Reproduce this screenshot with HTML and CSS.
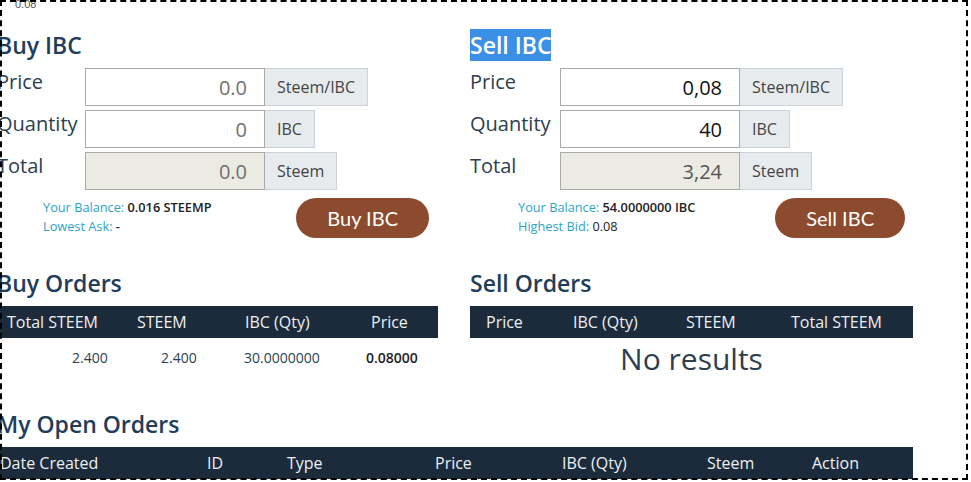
FILE: index.html
```html
<!DOCTYPE html>
<html lang="en">
<head>
    <meta charset="UTF-8">
    <meta name="viewport" content="width=device-width, initial-scale=1.0">
    <title>IBC Market</title>
    <link rel="stylesheet" href="styles.css">
</head>
<body>
    <div class="frame"></div>
    <div class="rate">0.08</div>

    <div class="page">
        <div class="cols">
            <section class="trade">
                <h2 class="title">Buy IBC</h2>

                <div class="field">
                    <label for="buyPrice">Price</label>
                    <div class="group">
                        <input type="text" id="buyPrice" class="num" placeholder="0.0">
                        <span class="addon">Steem/IBC</span>
                    </div>
                </div>
                <div class="field">
                    <label for="buyQty">Quantity</label>
                    <div class="group">
                        <input type="text" id="buyQty" class="num" placeholder="0">
                        <span class="addon">IBC</span>
                    </div>
                </div>
                <div class="field">
                    <label for="buyTotal">Total</label>
                    <div class="group">
                        <input type="text" id="buyTotal" class="num total" placeholder="0.0" readonly>
                        <span class="addon">Steem</span>
                    </div>
                </div>

                <div class="trade-foot">
                    <div class="info">
                        <div><span class="key">Your Balance:</span> <b>0.016 STEEMP</b></div>
                        <div><span class="key">Lowest Ask:</span> <b>-</b></div>
                    </div>
                    <button class="btn">Buy IBC</button>
                </div>
            </section>

            <section class="trade sell">
                <h2 class="title"><span class="picked">Sell IBC</span></h2>

                <div class="field">
                    <label for="sellPrice">Price</label>
                    <div class="group">
                        <input type="text" id="sellPrice" class="num" value="0,08">
                        <span class="addon">Steem/IBC</span>
                    </div>
                </div>
                <div class="field">
                    <label for="sellQty">Quantity</label>
                    <div class="group">
                        <input type="text" id="sellQty" class="num" value="40">
                        <span class="addon">IBC</span>
                    </div>
                </div>
                <div class="field">
                    <label for="sellTotal">Total</label>
                    <div class="group">
                        <input type="text" id="sellTotal" class="num total" value="3,24" readonly>
                        <span class="addon">Steem</span>
                    </div>
                </div>

                <div class="trade-foot">
                    <div class="info">
                        <div><span class="key">Your Balance:</span> <b>54.0000000 IBC</b></div>
                        <div><span class="key">Highest Bid:</span> <b class="light">0.08</b></div>
                    </div>
                    <button class="btn">Sell IBC</button>
                </div>
            </section>
        </div>

        <div class="cols">
            <section>
                <h2 class="title">Buy Orders</h2>
                <div class="grid buy-grid">
                    <div class="head">Total STEEM</div>
                    <div class="head">STEEM</div>
                    <div class="head">IBC (Qty)</div>
                    <div class="head">Price</div>
                    <div class="cell b1">2.400</div>
                    <div class="cell b2">2.400</div>
                    <div class="cell b3">30.0000000</div>
                    <div class="cell b4"><b>0.08000</b></div>
                </div>
            </section>

            <section>
                <h2 class="title">Sell Orders</h2>
                <div class="grid sell-grid">
                    <div class="head">Price</div>
                    <div class="head">IBC (Qty)</div>
                    <div class="head">STEEM</div>
                    <div class="head">Total STEEM</div>
                </div>
                <div class="empty">No results</div>
            </section>
        </div>

        <section class="open">
            <h2 class="title">My Open Orders</h2>
            <div class="grid open-grid">
                <div class="head">Date Created</div>
                <div class="head">ID</div>
                <div class="head">Type</div>
                <div class="head">Price</div>
                <div class="head">IBC (Qty)</div>
                <div class="head">Steem</div>
                <div class="head">Action</div>
            </div>
        </section>
    </div>
</body>
</html>
```

FILE: styles.css
```css
body {
    margin: 0;
    font-family: "Open Sans", Arial, sans-serif;
    color: #2c3e50;
    background-color: #fff;
}

.frame {
    position: fixed;
    left: 0;
    top: 0;
    width: 968px;
    height: 480px;
    box-sizing: border-box;
    border: 2px dashed #000;
    pointer-events: none;
    z-index: 5;
}

.rate {
    margin-top: -2px;
    padding-left: 15px;
    font-family: "Liberation Sans", Arial, sans-serif;
    font-size: 11px;
    line-height: 13px;
    color: #555;
}

.page {
    margin-left: -3px;
    width: 916px;
}

.cols {
    display: grid;
    grid-template-columns: 441px 1fr;
    column-gap: 32px;
}

.title {
    margin: 0 0 6px;
    font-size: 23px;
    font-weight: 600;
    line-height: 33px;
    color: #223d5a;
}

.trade .title {
    margin-top: 18px;
}

.picked {
    background-color: #3b8fe4;
    color: #fff;
}

.field {
    display: flex;
    margin-bottom: 4px;
}

.field label {
    width: 88px;
    font-size: 20px;
    line-height: 28px;
    color: #2c3e50;
}

.sell .field label {
    width: 90px;
}

.group {
    display: flex;
    height: 38px;
}

.num {
    width: 180px;
    height: 38px;
    box-sizing: border-box;
    border: 1px solid #aaa;
    padding: 0 17px 0 8px;
    font-family: "Open Sans", Arial, sans-serif;
    font-size: 20px;
    text-align: right;
    color: #111;
    outline: none;
}

.num::placeholder {
    color: #707070;
}

.num.total {
    background-color: #ebeae3;
    color: #555;
}

.addon {
    display: flex;
    align-items: center;
    padding: 0 12px;
    box-sizing: border-box;
    border: 1px solid #ccd2d8;
    border-left: none;
    background-color: #e8ebee;
    font-size: 16px;
    color: #444;
}

.trade-foot {
    display: flex;
    justify-content: space-between;
    align-items: flex-start;
    margin-top: 8px;
    padding: 0 9px 0 46px;
}

.sell .trade-foot {
    padding: 0 8px 0 48px;
}

.info {
    font-size: 12.75px;
    line-height: 19px;
}

.info .key {
    color: #2ba4c9;
}

.info b {
    font-weight: 600;
    color: #222;
}

.info b.light {
    font-weight: 500;
}

.btn {
    height: 40px;
    padding: 0 31px;
    border: none;
    border-radius: 20px;
    background-color: #8c4a2e;
    color: #fff;
    font-family: Lato, "Open Sans", sans-serif;
    font-size: 20px;
    cursor: pointer;
}

.cols + .cols {
    margin-top: 29px;
}

.grid {
    display: grid;
}

.head {
    height: 32px;
    line-height: 32px;
    background-color: #1b2b3b;
    color: #eef0f2;
    font-size: 16px;
    white-space: nowrap;
}

.buy-grid {
    grid-template-columns: 130px 108px 126px 1fr;
}

.buy-grid .head {
    padding-left: 10px;
}

.cell {
    padding: 10px 0 8px;
    font-size: 14px;
    line-height: 19px;
    color: #2c3e50;
}

.cell b {
    font-weight: 600;
    color: #222;
}

.b1 { padding-left: 75px; }
.b2 { padding-left: 34px; }
.b3 { padding-left: 9px; }
.b4 { padding-left: 5px; }

.sell-grid {
    grid-template-columns: 87px 113px 105px 1fr;
}

.sell-grid .head {
    padding-left: 16px;
}

.empty {
    text-align: center;
    font-size: 30px;
    line-height: 41px;
    color: #2c3e50;
}

.open {
    margin-top: 29px;
}

.open-grid {
    grid-template-columns: 207px 80px 148px 127px 145px 105px 1fr;
}

.open-grid .head {
    padding-left: 3px;
}
```
